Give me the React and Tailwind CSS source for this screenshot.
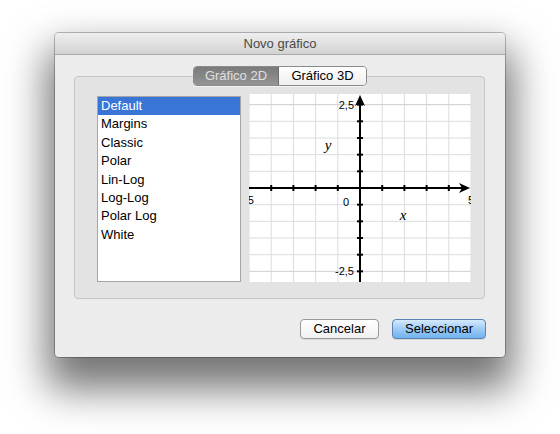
import React from "react";

const items = ["Default", "Margins", "Classic", "Polar", "Lin-Log", "Log-Log", "Polar Log", "White"];

function Graph() {
  const W = 222;
  const H = 188;
  const ox = 111;
  const oy = 94;
  const ux = 22.2;
  const uy = 16.67;
  const vx = [];
  for (let k = -5; k <= 5; k++) vx.push(ox + k * ux);
  const hy = [];
  for (let k = -5; k <= 5; k++) hy.push(oy + k * uy);
  return (
    <svg width={W} height={H} viewBox={`0 0 ${W} ${H}`} className="block">
      <rect x="0" y="0" width={W} height={H} fill="#ffffff" />
      {vx.map((x, i) => (
        <line key={"v" + i} x1={x} y1="0" x2={x} y2={H} stroke="#dcdcdc" strokeWidth="1" />
      ))}
      {hy.map((y, i) => (
        <line key={"h" + i} x1="0" y1={y} x2={W} y2={y} stroke={i === 0 || i === 10 ? "#cfcfcf" : "#dcdcdc"} strokeWidth="1" />
      ))}
      <line x1="0" y1={oy} x2={W - 6} y2={oy} stroke="#000" strokeWidth="2" />
      <polygon points={`${W - 1},${oy} ${W - 12},${oy - 5} ${W - 9},${oy} ${W - 12},${oy + 5}`} fill="#000" />
      <line x1={ox} y1={H} x2={ox} y2="6" stroke="#000" strokeWidth="2" />
      <polygon points={`${ox},1 ${ox - 5},12 ${ox},9 ${ox + 5},12`} fill="#000" />
      {vx.slice(1, 10).map((x, i) => (
        <line key={"tx" + i} x1={x} y1={oy - 3} x2={x} y2={oy + 3} stroke="#000" strokeWidth="2" />
      ))}
      {hy.map((y, i) => (
        <line key={"ty" + i} x1={ox - 3} y1={y} x2={ox + 3} y2={y} stroke="#000" strokeWidth="2" />
      ))}
      <g fontFamily="'Liberation Sans', Arial, sans-serif" fontSize="11" fill="#000">
        <text x="105" y="15" textAnchor="end">2,5</text>
        <text x="105" y="181" textAnchor="end">-2,5</text>
        <text x="97" y="112" textAnchor="middle">0</text>
        <text x="0" y="110" textAnchor="middle">-5</text>
        <text x={W} y="110" textAnchor="middle">5</text>
      </g>
      <g fontFamily="'Liberation Serif', 'Times New Roman', serif" fontSize="15" fontStyle="italic" fill="#000">
        <text x="154" y="126" textAnchor="middle">x</text>
        <text x="79" y="56" textAnchor="middle">y</text>
      </g>
    </svg>
  );
}

export default function App() {
  return (
    <div
      className="w-[560px] h-[434px] bg-white pt-[33px] pl-[55px] overflow-hidden"
      style={{ fontFamily: "'Liberation Sans', Arial, sans-serif" }}
    >
      <div className="w-[450px] h-[324px] flex flex-col rounded-[4px] bg-[#ececec] shadow-[0_24px_40px_8px_rgba(0,0,0,0.55),0_0_0_1px_rgba(0,0,0,0.25)]">
        <div className="h-[22px] shrink-0 rounded-t-[4px] bg-gradient-to-b from-[#efefef] to-[#d2d2d2] border-b border-[#a9a9a9] flex items-center justify-center text-[13px] text-[#4a4a4a]">
          Novo gráfico
        </div>
        <div className="flex-1 flex flex-col">
          <div className="flex justify-center mt-[11px] relative z-10">
            <div className="flex h-[20px] rounded-[4px] border border-[#8a8a8a] overflow-hidden text-[13px] shadow-[0_1px_0_rgba(255,255,255,0.6)]">
              <div className="w-[85px] flex items-center justify-center bg-gradient-to-b from-[#7a7a7a] to-[#949494] text-[#e0e0e0] border-r border-[#6e6e6e]">
                Gráfico 2D
              </div>
              <div className="w-[87px] flex items-center justify-center bg-gradient-to-b from-[#ffffff] to-[#efefef] text-black">
                Gráfico 3D
              </div>
            </div>
          </div>
          <div className="ml-[19px] mr-[20px] -mt-[10px] h-[223px] rounded-[4px] border border-[#c6c6c6] bg-[#e3e3e3] flex gap-[8px] pl-[22px] pt-[19px]">
            <div className="w-[144px] h-[186px] bg-white border border-[#a5a5a5] flex flex-col text-[13px]">
              {items.map((it, i) => (
                <div
                  key={it}
                  className={
                    i === 0
                      ? "h-[18.4px] leading-[18.4px] pl-[3px] bg-[#3875d7] text-white"
                      : "h-[18.4px] leading-[18.4px] pl-[3px] text-black"
                  }
                >
                  {it}
                </div>
              ))}
            </div>
            <div className="-mt-[2px]">
              <Graph />
            </div>
          </div>
          <div className="flex justify-end gap-[13px] mr-[19px] mt-[20px]">
            <button className="w-[79px] h-[20px] rounded-[4px] border border-[#999999] bg-gradient-to-b from-[#ffffff] to-[#f0f0f0] text-[13px] text-black flex items-center justify-center shadow-[0_1px_0_rgba(0,0,0,0.08)]">
              Cancelar
            </button>
            <button className="w-[94px] h-[20px] rounded-[4px] border border-[#5b83b3] bg-gradient-to-b from-[#d6eafc] via-[#9ccbf5] to-[#71b2ee] text-[13px] text-black flex items-center justify-center shadow-[0_1px_0_rgba(0,0,0,0.08)]">
              Seleccionar
            </button>
          </div>
        </div>
      </div>
    </div>
  );
}
